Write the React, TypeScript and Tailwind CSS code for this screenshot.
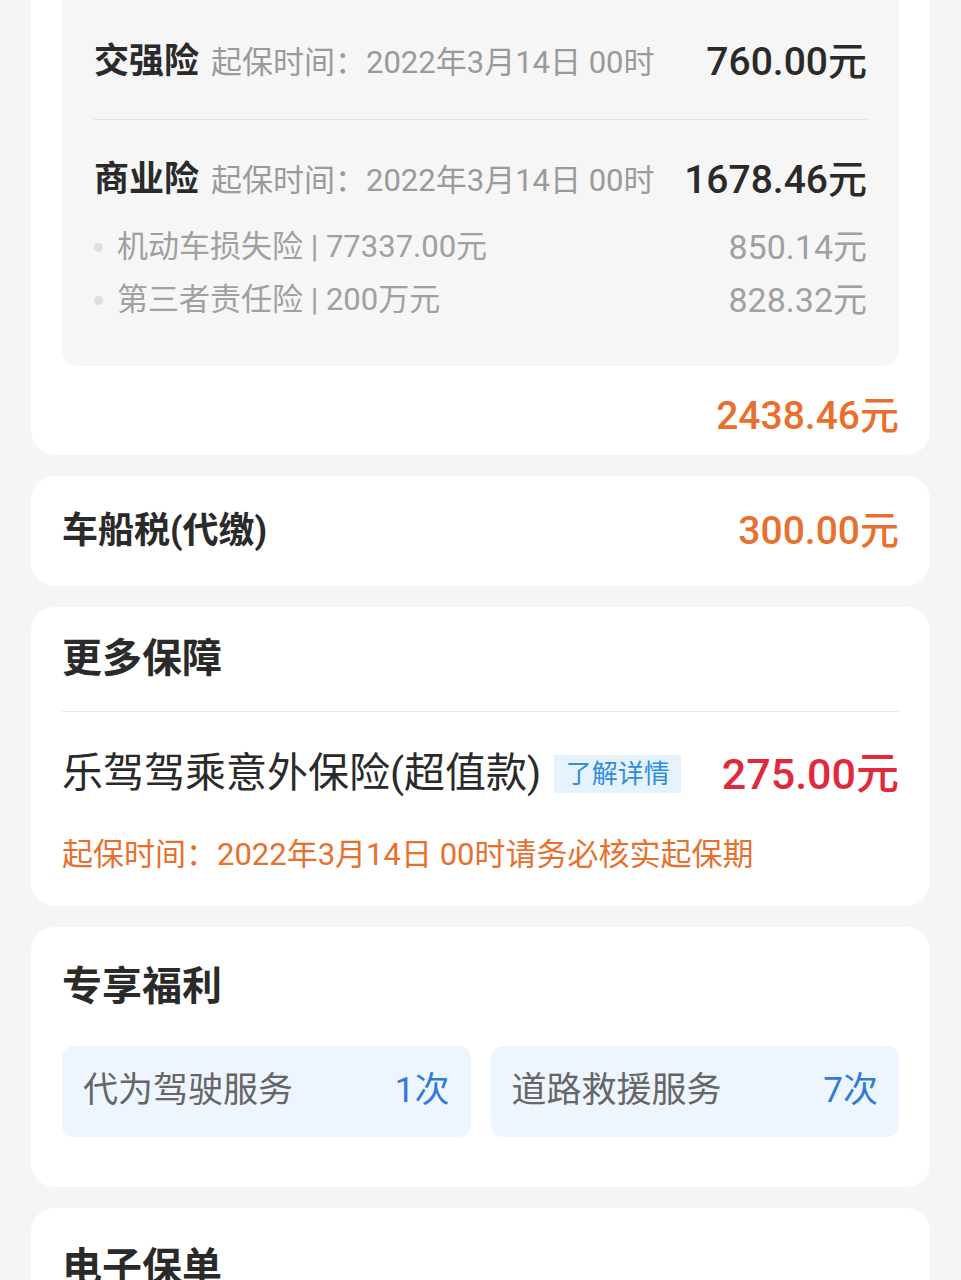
import React from "react";

const FONT = { fontFamily: 'Roboto, "Noto Sans CJK SC", sans-serif' };

function Dot() {
  return <span className="mr-[14px] inline-block h-[9px] w-[9px] rounded-full bg-[#dedede]" />;
}

export default function App() {
  return (
    <div
      className="flex min-h-[1280px] w-full flex-col gap-[21px] overflow-hidden bg-[#f5f5f5]"
      style={FONT}
    >
      {/* Card 1 */}
      <div className="mx-[31px] -mt-[60px] rounded-[24px] bg-white px-[31px] pb-[14px] pt-[31px]">
        <div className="rounded-[16px] bg-[#f6f6f6] px-[32px] pb-[43px] pt-[61px]">
          <div className="flex h-[60px] items-center justify-between">
            <div className="flex items-baseline">
              <span className="text-[35px] font-bold text-[#2a2a2a]">交强险</span>
              <span className="ml-[12px] text-[31px] text-[#9a9a9a]">起保时间：2022年3月14日 00时</span>
            </div>
            <span className="text-[39px] font-medium text-[#2a2a2a]">760.00元</span>
          </div>
          <div className="mt-[27px] h-px bg-[#e3e3e3]" />
          <div className="mt-[30px] flex h-[60px] items-center justify-between">
            <div className="flex items-baseline">
              <span className="text-[35px] font-bold text-[#2a2a2a]">商业险</span>
              <span className="ml-[12px] text-[31px] text-[#9a9a9a]">起保时间：2022年3月14日 00时</span>
            </div>
            <span className="text-[39px] font-medium text-[#2a2a2a]">1678.46元</span>
          </div>
          <div className="mt-[14px] flex h-[46px] items-center justify-between text-[#a0a0a0]">
            <div className="flex items-center">
              <Dot />
              <span className="text-[31px]">机动车损失险 | 77337.00元</span>
            </div>
            <span className="text-[34px]">850.14元</span>
          </div>
          <div className="mt-[7px] flex h-[46px] items-center justify-between text-[#a0a0a0]">
            <div className="flex items-center">
              <Dot />
              <span className="text-[31px]">第三者责任险 | 200万元</span>
            </div>
            <span className="text-[34px]">828.32元</span>
          </div>
        </div>
        <div className="mt-[25px] flex h-[50px] items-center justify-end">
          <span className="text-[39px] font-medium text-[#e8702c]">2438.46元</span>
        </div>
      </div>

      {/* Card 2 */}
      <div className="mx-[31px] flex h-[110px] items-center justify-between rounded-[24px] bg-white px-[31px]">
        <span className="text-[36px] font-bold text-[#2a2a2a]">车船税(代缴)</span>
        <span className="text-[39px] font-medium text-[#e8702c]">300.00元</span>
      </div>

      {/* Card 3 */}
      <div className="mx-[31px] rounded-[24px] bg-white px-[31px] pb-[31px] pt-[22px]">
        <div className="flex h-[60px] items-center">
          <span className="text-[40px] font-bold text-[#2a2a2a]">更多保障</span>
        </div>
        <div className="mt-[22px] h-px bg-[#e8e8e8]" />
        <div className="mt-[32px] flex h-[60px] items-center justify-between">
          <div className="flex items-center">
            <span className="text-[41px] text-[#2a2a2a]">乐驾驾乘意外保险(超值款)</span>
            <span className="ml-[13px] flex h-[38px] w-[127px] items-center justify-center bg-[#e6f3fd] text-[26px] text-[#2e8fdc]">
              了解详情
            </span>
          </div>
          <span className="text-[43px] font-medium text-[#e2283a]">275.00元</span>
        </div>
        <div className="mt-[31px] flex h-[40px] items-center">
          <span className="text-[31px] text-[#e8702c]">起保时间：2022年3月14日 00时请务必核实起保期</span>
        </div>
      </div>

      {/* Card 4 */}
      <div className="mx-[31px] rounded-[24px] bg-white px-[31px] pb-[50px] pt-[30px]">
        <div className="flex h-[60px] items-center">
          <span className="text-[40px] font-bold text-[#2a2a2a]">专享福利</span>
        </div>
        <div className="mt-[29px] grid grid-cols-2 gap-[20px]">
          <div className="flex h-[91px] items-center justify-between rounded-[12px] bg-[#edf5fe] px-[21px]">
            <span className="text-[35px] text-[#666666]">代为驾驶服务</span>
            <span className="text-[35px] text-[#2f7bd8]">1次</span>
          </div>
          <div className="flex h-[91px] items-center justify-between rounded-[12px] bg-[#edf5fe] px-[21px]">
            <span className="text-[35px] text-[#666666]">道路救援服务</span>
            <span className="text-[35px] text-[#2f7bd8]">7次</span>
          </div>
        </div>
      </div>

      {/* Card 5 */}
      <div className="mx-[31px] h-[200px] rounded-[24px] bg-white px-[31px] pt-[30px]">
        <div className="flex h-[60px] items-center">
          <span className="text-[40px] font-bold text-[#2a2a2a]">电子保单</span>
        </div>
      </div>
    </div>
  );
}
